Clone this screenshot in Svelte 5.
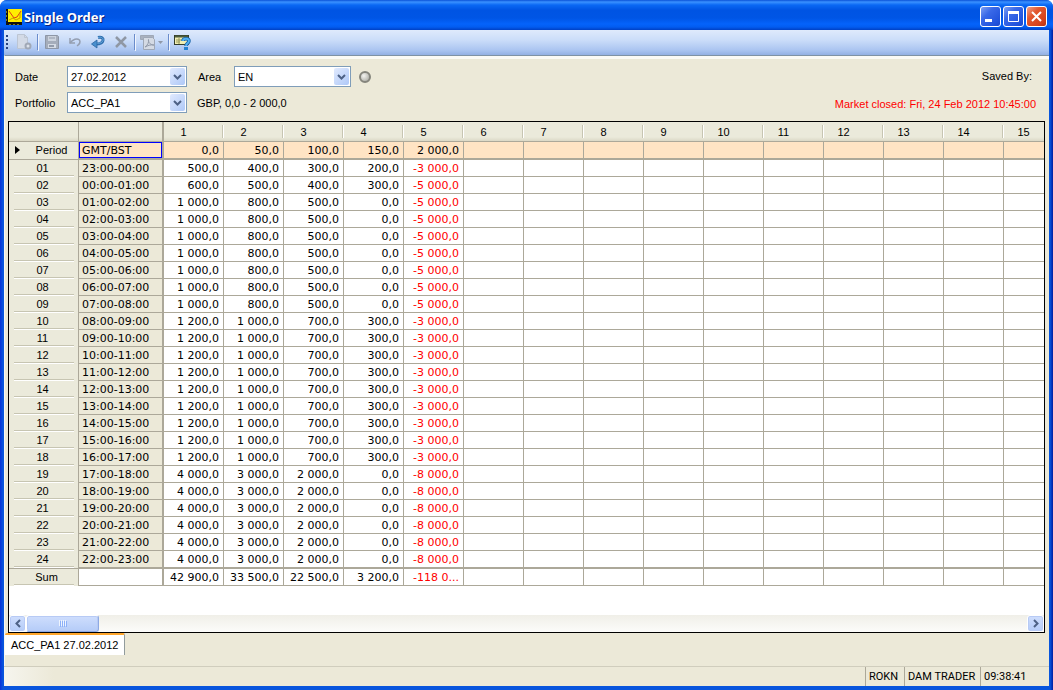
<script>
const columns = Array.from({length: 15}, (_, i) => i + 1);
const steps = ["0,0", "50,0", "100,0", "150,0", "2 000,0"];

// runs of hours that share the same bid
const blocks = [
    {count: 1, values: ["500,0", "400,0", "300,0", "200,0", "-3 000,0"]},
    {count: 1, values: ["600,0", "500,0", "400,0", "300,0", "-5 000,0"]},
    {count: 7, values: ["1 000,0", "800,0", "500,0", "0,0", "-5 000,0"]},
    {count: 9, values: ["1 200,0", "1 000,0", "700,0", "300,0", "-3 000,0"]},
    {count: 6, values: ["4 000,0", "3 000,0", "2 000,0", "0,0", "-8 000,0"]},
];
const sums = ["42 900,0", "33 500,0", "22 500,0", "3 200,0", "-118 0..."];

const pad = (n) => String(n).padStart(2, "0");

const rows = blocks
    .flatMap((b) => Array.from({length: b.count}, () => b.values))
    .map((values, i) => ({
        nr: pad(i + 1),
        time: `${pad((i + 23) % 24)}:00-${pad(i)}:00`,
        values,
    }));

let date = $state("27.02.2012");
let area = $state("EN");
let portfolio = $state("ACC_PA1");
</script>

{#snippet arrow()}
    <span class="arrow">
        <svg width="9" height="6" viewBox="0 0 9 6"><path d="M1 1l3.500 3.500L8 1" fill="none" stroke="#4d6185" stroke-width="2" /></svg>
    </span>
{/snippet}

<div class="window">
    <header class="titlebar">
        <svg width="16" height="16" viewBox="0 0 16 16">
            <rect width="16" height="16" fill="#111" />
            <rect x="2" y="0" width="14" height="13" fill="#ffee00" />
            <path d="M3 2l5 7 3-1 4-6" fill="none" stroke="#e03a1a" />
            <path d="M3 11l4-2 3 2 4-2V3" fill="none" stroke="#c79a00" />
            <path d="M0 3h1M0 7h1M0 11h1M4 15v1M8 15v1M12 15v1" stroke="#ffee00" />
        </svg>
        <h1>Single Order</h1>
        <button class="caption" aria-label="Minimize">
            <svg width="19" height="19" viewBox="0 0 19 19"><path d="M4 13.500h7" stroke="#fff" stroke-width="3" /></svg>
        </button>
        <button class="caption" aria-label="Maximize">
            <svg width="19" height="19" viewBox="0 0 19 19"><path d="M4 5.500h11" stroke="#fff" stroke-width="3" /><path d="M4.500 6v8.500h10V6" fill="none" stroke="#fff" /></svg>
        </button>
        <button class="caption close" aria-label="Close">
            <svg width="19" height="19" viewBox="0 0 19 19"><path d="M5 5l9 9M14 5l-9 9" stroke="#fff" stroke-width="2" /></svg>
        </button>
    </header>

    <div class="toolbar">
        <svg class="grip" width="3" height="16" viewBox="0 0 3 16"><path d="M1 1v2M1 5v2M1 9v2M1 13v2" stroke="#27417c" stroke-width="2" /></svg>
        <button aria-label="New">
            <svg width="16" height="16" viewBox="0 0 16 16"><path d="M1.500 .5h7l3 3v11h-10z" fill="#d3dae6" stroke="#bcc5d3" /><path d="M8.500 .5v3h3" fill="none" stroke="#bcc5d3" /><circle cx="12" cy="12" r="2.500" fill="#dde2ea" stroke="#a0a8b6" stroke-width="2" /></svg>
        </button>
        <i></i>
        <button aria-label="Save">
            <svg width="16" height="16" viewBox="0 0 16 16"><path d="M1.500 1.500h12l1 1v12h-13z" fill="#a5adbb" stroke="#8d96a6" /><path d="M4 2h8v5H4z" fill="#ccd3de" /><path d="M5 4h6" stroke="#929bab" /><path d="M4 10h8v4H4z" fill="#d5dbe5" /><path d="M5 12h5" stroke="#929bab" stroke-width="2" /></svg>
        </button>
        <button aria-label="Undo">
            <svg width="16" height="16" viewBox="0 0 16 16"><path d="M3 4v5h5" fill="none" stroke="#949eb0" stroke-width="1.500" /><path d="M3 9C6 5 10 4 12.500 6c1 2 .5 4-2.500 6" fill="none" stroke="#949eb0" stroke-width="1.500" /></svg>
        </button>
        <button aria-label="Refresh">
            <svg width="16" height="16" viewBox="0 0 16 16"><path d="M8 3.500c4-1 5.500 1 5 3C12.500 9 10 10 6 10" fill="none" stroke="#2f6faf" stroke-width="3" /><path d="M8 3.500c4-1 5.500 1 5 3C12.500 8.500 10 9.500 6 9.500" fill="none" stroke="#6aa9de" stroke-width="1" /><path d="M7 6v8L1.500 10z" fill="#4a8fce" stroke="#2b65a2" stroke-width=".8" /></svg>
        </button>
        <button aria-label="Delete">
            <svg width="16" height="16" viewBox="0 0 16 16"><path d="M3 3l10 10M13 3L3 13" stroke="#8f97a4" stroke-width="2.500" /></svg>
        </button>
        <i></i>
        <button class="wide" aria-label="Export">
            <svg width="25" height="16" viewBox="0 0 25 16"><path d="M1.500 1.500h13v4h-13z" fill="#a9b1bf" stroke="#9fa8b7" /><path d="M4.500 3.500h9l2 2v10h-11z" fill="#d4dae4" stroke="#9fa8b7" /><path d="M6 13c3-2 4-5 3.500-7.500C9 9 12 11 15 11c-4-.5-6 .5-9 2" fill="none" stroke="#929bab" /><path d="M19 7h5l-2.500 3z" fill="#8f98a8" /></svg>
        </button>
        <i></i>
        <button aria-label="Help">
            <svg width="17" height="16" viewBox="0 0 17 16"><rect x=".5" y="1.500" width="14" height="9" fill="#f1efb4" stroke="#333d2c" /><path d="M1 2.500h13" stroke="#4c5b39" stroke-width="2" /><path d="M2 6h6M2 8h4M5 4v6" stroke="#97985c" /><path d="M9 7c0-3 6-3 6 0 0 2.500-3 2-3 5" fill="none" stroke="#1764aa" stroke-width="3.500" /><path d="M9 7c0-3 6-3 6 0 0 2.500-3 2-3 5" fill="none" stroke="#52b0f2" stroke-width="1.800" /><rect x="10" y="13" width="4" height="3" fill="#2381d0" /></svg>
        </button>
    </div>

    <main>
        <section class="filters">
            <div class="fields">
                <div class="line">
                    <label class="first" for="date">Date</label>
                    <span class="combo">
                        <select id="date" bind:value={date}><option>27.02.2012</option></select>
                        {@render arrow()}
                    </span>
                    <label class="area" for="area">Area</label>
                    <span class="combo narrow">
                        <select id="area" bind:value={area}><option>EN</option></select>
                        {@render arrow()}
                    </span>
                    <span class="led"></span>
                </div>
                <div class="line">
                    <label class="first" for="portfolio">Portfolio</label>
                    <span class="combo">
                        <select id="portfolio" bind:value={portfolio}><option>ACC_PA1</option></select>
                        {@render arrow()}
                    </span>
                    <span class="range">GBP, 0,0 - 2 000,0</span>
                </div>
            </div>
            <div class="status">
                <p class="saved">Saved By:</p>
                <p class="closed">Market closed: Fri, 24 Feb 2012 10:45:00</p>
            </div>
        </section>

        <div class="grid">
            <div class="sheet">
                <table>
                    <colgroup>
                        <col class="c-nr" />
                        <col class="c-time" />
                        {#each columns as c}<col class="c-value" />{/each}
                    </colgroup>
                    <thead>
                        <tr>
                            <td></td>
                            <td class="corner"></td>
                            {#each columns as c}<th scope="col">{c}</th>{/each}
                        </tr>
                    </thead>
                    <tbody>
                        <tr class="period">
                            <th scope="row">
                                <svg class="marker" width="5" height="8" viewBox="0 0 5 8"><path d="M0 0l5 4-5 4z" /></svg>
                                <span class="period-label">Period</span>
                            </th>
                            <td class="time current">GMT/BST</td>
                            {#each columns as c, i}<td>{steps[i] ?? ""}</td>{/each}
                        </tr>
                        {#each rows as row}
                            <tr class="hour">
                                <th scope="row"><span>{row.nr}</span></th>
                                <td class="time">{row.time}</td>
                                {#each columns as c, i}
                                    <td class:negative={row.values[i]?.startsWith("-")}>{row.values[i] ?? ""}</td>
                                {/each}
                            </tr>
                        {/each}
                        <tr class="sum">
                            <th scope="row"><span class="sum-label">Sum</span></th>
                            <td class="time"></td>
                            {#each columns as c, i}
                                <td class:negative={sums[i]?.startsWith("-")}>{sums[i] ?? ""}</td>
                            {/each}
                        </tr>
                    </tbody>
                </table>
            </div>
            <div class="scrollbar">
                <button class="step" aria-label="Scroll left"><svg width="6" height="9" viewBox="0 0 6 9"><path d="M5 1L1.500 4.500 5 8" fill="none" stroke="#4d6185" stroke-width="2" /></svg></button>
                <div class="thumb"><svg width="8" height="7" viewBox="0 0 8 7"><path d="M.5 0v6M2.500 0v6M4.500 0v6M6.500 0v6" stroke="#eef4fe" /><path d="M1.500 1v6M3.500 1v6M5.500 1v6M7.500 1v6" stroke="#8cb0f8" /></svg></div>
                <button class="step right" aria-label="Scroll right"><svg width="6" height="9" viewBox="0 0 6 9"><path d="M1 1l3.500 3.500L1 8" fill="none" stroke="#4d6185" stroke-width="2" /></svg></button>
            </div>
        </div>

        <div class="tabs"><button class="tab">ACC_PA1 27.02.2012</button></div>
    </main>

    <footer>
        <span class="user">ROKN</span>
        <span class="role">DAM TRADER</span>
        <span class="clock">09:38:41</span>
    </footer>
</div>

<style>
:global(body) {
    background: #fff;
}
.window {
    box-sizing: border-box;
    min-height: 100vh;
    display: flex;
    flex-direction: column;
    padding: 0 4px 4px;
    background: linear-gradient(90deg, #0831d9 0, #0855dd 3px, #0855dd calc(100% - 3px), #001ea0 100%);
    border-radius: 7px 7px 0 0;
    overflow: hidden;
    font-family: "Liberation Sans", Arial, sans-serif;
    font-size: 11px;
    line-height: 14px;
    color: #000;
}
button, select {
    font: inherit;
    color: inherit;
    padding: 0;
    margin: 0;
    border: 0;
}
.titlebar {
    box-sizing: border-box;
    height: 30px;
    margin: 0 -4px;
    padding: 3px 6px 0;
    display: flex;
    align-items: center;
    gap: 2px;
    background: linear-gradient(#0a52d8 0, #3a91ff 2px, #0a68f4 5px, #0054e3 10px, #0055e5 18px, #0463fb 24px, #025cf0 27px, #0040c4 30px);
}
h1 {
    flex: 1;
    margin: 0;
    font-family: "Noto Sans", sans-serif;
    font-size: 13px;
    line-height: 18px;
    font-weight: 700;
    color: #fff;
    text-shadow: 1px 1px 0 #0a1f7a;
}
.caption {
    width: 21px;
    height: 21px;
    border: 1px solid #fff;
    border-radius: 3px;
    background: linear-gradient(135deg, #7d9ff2 0, #3a69e8 35%, #2153dc 80%, #1b48cc 100%);
}
.caption svg {
    display: block;
}
.close {
    background: linear-gradient(135deg, #f0a08a 0, #e2582f 35%, #d8431c 75%, #b5320f 100%);
}
.toolbar {
    box-sizing: border-box;
    height: 25px;
    padding: 0 2px 2px;
    display: flex;
    align-items: center;
    background: linear-gradient(#dfeafc 0, #cbddf9 10px, #abc5f1 20px, #93b0e3 25px);
}
.toolbar button {
    width: 23px;
    height: 22px;
    display: flex;
    align-items: center;
    justify-content: center;
    background: none;
}
.toolbar .grip {
    margin-right: 3px;
}
.toolbar .wide {
    width: 29px;
}
.toolbar i {
    width: 1px;
    height: 16px;
    margin: 0 2px;
    background: #6a8ccb;
    box-shadow: 1px 1px 0 #f1f5fd;
}
main {
    flex: 1;
    padding: 0 4px 0 0;
    border-top: 1px solid #7f92a4;
    border-left: 1px solid #f8f7f0;
    box-shadow: inset 0 3px 0 #fbfaf5;
    background: #ece9d8;
}
.filters {
    display: flex;
    justify-content: space-between;
    padding: 10px 9px 8px 10px;
}
.fields {
    display: flex;
    flex-direction: column;
    gap: 5px;
}
.line {
    display: flex;
    align-items: center;
}
.first {
    width: 52px;
}
.combo {
    position: relative;
    width: 120px;
    height: 21px;
}
.narrow {
    width: 117px;
}
select {
    appearance: none;
    box-sizing: border-box;
    width: 100%;
    height: 100%;
    padding: 0 18px 0 3px;
    border: 1px solid #7f9db9;
    border-radius: 0;
    background: #fff;
}
.arrow {
    position: absolute;
    top: 2px;
    right: 2px;
    width: 15px;
    height: 17px;
    display: flex;
    align-items: center;
    justify-content: center;
    border-radius: 2px;
    background: linear-gradient(135deg, #e1eafe, #aec8f7);
    pointer-events: none;
}
.area {
    width: 36px;
    margin-left: 11px;
}
.led {
    box-sizing: border-box;
    width: 12px;
    height: 12px;
    margin-left: 8px;
    border: 2px solid #85857c;
    border-radius: 50%;
    background: radial-gradient(circle at 35% 35%, #f4f4f0, #a3a39b);
}
.range {
    margin-left: 10px;
}
.status {
    text-align: right;
}
p {
    margin: 0;
}
.saved {
    padding: 3px 4px 14px 0;
}
.closed {
    color: #f00;
}
.grid {
    margin-left: 3px;
    border: 1px solid #000;
    background: #fff;
}
.sheet {
    overflow: hidden;
    padding-bottom: 29px;
    background: #fff;
}
table {
    table-layout: fixed;
    width: 0;
    border-collapse: separate;
    border-spacing: 0;
    font-family: "DejaVu Sans", Verdana, sans-serif;
    line-height: 14px;
}
.c-nr {
    width: 70px;
}
.c-time {
    width: 85px;
}
.c-value {
    width: 60px;
}
td, th {
    box-sizing: border-box;
    height: 17px;
    padding: 2px 4px 0 0;
    border-right: 1px solid #aca899;
    border-bottom: 1px solid #aca899;
    font-weight: 400;
    text-align: right;
    white-space: nowrap;
    overflow: hidden;
}
th, thead td {
    padding: 0;
    background: #ebeadb;
    font-family: "Liberation Sans", Arial, sans-serif;
    text-align: center;
}
thead td, thead th {
    height: 20px;
    border-right: 0;
    background: linear-gradient(#ebeadb 15px, #dbd8c6);
}
thead td:first-child {
    border-right: 1px solid #aca899;
}
thead .corner {
    border-right: 2px solid #aca899;
}
thead th {
    padding-right: 21px;
    background:
        linear-gradient(#c7c5b2, #c7c5b2) 58px 3px / 1px 13px no-repeat,
        linear-gradient(#fff, #fff) 59px 3px / 1px 13px no-repeat,
        linear-gradient(#ebeadb 15px, #dbd8c6);
}
tbody th {
    padding: 0 4px 0 5px;
}
tbody th span {
    display: block;
    border-bottom: 1px solid #c7c5b2;
    box-shadow: 0 1px 0 #fff;
}
.hour th, .sum th {
    border-bottom: 0;
}
.hour th span, .sum th span {
    height: 14px;
    padding-right: 3px;
    margin-bottom: 1px;
}
td.time {
    padding-left: 3px;
    border-right-width: 2px;
    background: #ece9d8;
    text-align: left;
}
.sum td.time {
    background: #fff;
}
.period td, .period th {
    height: 18px;
    border-bottom-width: 2px;
}
.period th {
    border-bottom: 1px solid #aca899;
    position: relative;
}
.period td {
    background: #ffe4c4;
}
.period th .period-label {
    height: 16px;
    padding-left: 15px;
    border: 0;
    box-shadow: none;
}
.period .current {
    background: #ffe4c4;
    box-shadow: inset 0 0 0 1px #00f;
}
.marker {
    position: absolute;
    left: 6px;
    top: 4px;
}
.hour:nth-last-child(2) td {
    height: 18px;
    border-bottom-width: 2px;
}
.hour:nth-last-child(2) th {
    border-bottom: 1px solid #aca899;
}
.sum th .sum-label {
    padding-left: 8px;
}
.negative {
    color: #f00;
}
.scrollbar {
    display: flex;
    height: 17px;
    background: linear-gradient(#f0efe8, #fcfcfa);
}
.step {
    width: 17px;
    display: flex;
    align-items: center;
    justify-content: center;
}
.step, .thumb {
    box-sizing: border-box;
    border: 1px solid #fff;
    border-radius: 3px;
    background: linear-gradient(#cfdefd, #b5ccf8);
    box-shadow: inset 0 0 0 1px #b7caf5;
}
.right {
    margin-left: auto;
}
.thumb {
    width: 73px;
    display: flex;
    align-items: center;
    justify-content: center;
    border-bottom-color: #8eaae4;
    border-right-color: #8eaae4;
}
.tabs {
    height: 33px;
}
.tab {
    height: 22px;
    padding: 0 6px;
    border-top: 2px solid #ffa62b;
    border-right: 1px solid #919b9c;
    border-radius: 2px 2px 0 0;
    background: #fff;
}
footer {
    display: flex;
    justify-content: flex-end;
    height: 19px;
    border-top: 1px solid #d0cdbd;
    background: linear-gradient(90deg, #f6f5ee, #ece9d8 50px);
    font-family: Roboto, Tahoma, sans-serif;
}
footer span {
    box-sizing: border-box;
    padding: 2px 3px 0;
    border-left: 1px solid #aca899;
    line-height: 16px;
    white-space: nowrap;
}
.user {
    width: 39px;
}
.role {
    width: 76px;
}
.clock {
    width: 69px;
}
</style>
